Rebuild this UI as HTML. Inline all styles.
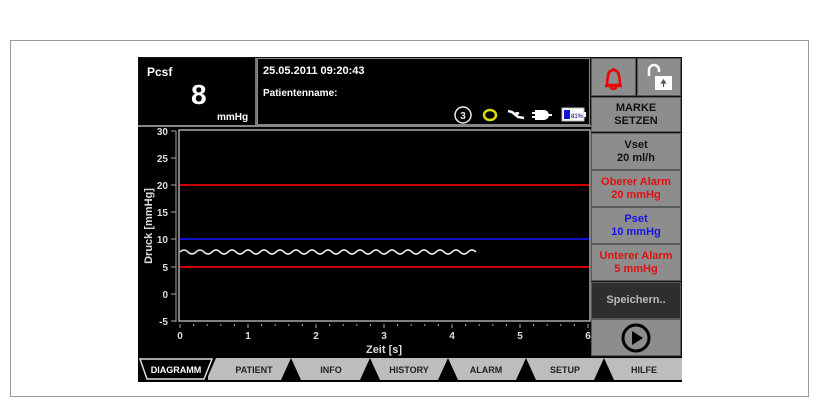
<!DOCTYPE html>
<html><head><meta charset="utf-8"><style>
body{margin:0;width:820px;height:410px;background:#fff;overflow:hidden;font-family:"Liberation Sans","DejaVu Sans",sans-serif;}
.outer{position:absolute;left:10px;top:40px;width:799px;height:357px;border:1px solid #9a9a9a;box-sizing:border-box;}
.scr{position:absolute;left:138px;top:57px;width:544px;height:325px;background:#111;}
.b{position:absolute;box-sizing:border-box;font-weight:bold;text-align:center;font-size:11px;line-height:13px;}
.btn{background:#8d8d8d;border:1px solid #5a5a5a;color:#111;left:591px;width:90px;display:flex;flex-direction:column;justify-content:center;align-items:center;}
</style></head><body>
<div class="outer"></div>
<div class="scr"></div>
<div class="b" style="left:139px;top:58px;width:116px;height:67px;background:#000;color:#fff;text-align:left;">
 <div style="position:absolute;left:8px;top:8px;font-size:12px;">Pcsf</div>
 <div style="position:absolute;left:52px;top:22px;font-size:28px;line-height:30px;">8</div>
 <div style="position:absolute;left:78px;top:53px;font-size:10px;">mmHg</div>
</div>
<div style="position:absolute;left:255px;top:58px;width:2px;height:68px;background:#777"></div>
<div class="b" style="left:257px;top:58px;width:333px;height:67px;background:#000;color:#fff;text-align:left;border:1px solid #888;">
 <div style="position:absolute;left:5px;top:6px;font-size:11px;">25.05.2011 09:20:43</div>
 <div style="position:absolute;left:5px;top:28px;font-size:10px;">Patientenname:</div>
 <svg style="position:absolute;left:190px;top:46px" width="140" height="20">
  <circle cx="15" cy="10" r="8" fill="none" stroke="#eee" stroke-width="1.5"/>
  <text x="15" y="14" font-size="10" fill="#eee" text-anchor="middle" font-family="Liberation Sans">3</text>
  <ellipse cx="42" cy="10" rx="6" ry="5" fill="none" stroke="#dd0" stroke-width="2.5"/>
  <path d="M60 6 l4 1 l6 5 l6 1 M66 9 l5 -1" stroke="#fff" stroke-width="2.5" fill="none"/>
  <path d="M88 6 h8 a4 4 0 0 1 0 8 h-8z M98 10h6 M84 8h4 M84 12h4" stroke="#fff" stroke-width="2" fill="#fff"/>
  <rect x="114" y="3" width="22" height="13" fill="#fff" stroke="#bbb"/>
  <rect x="136" y="7" width="2" height="5" fill="#fff"/>
  <rect x="116" y="5" width="6" height="9" fill="#1515d0"/>
  <text x="123" y="13" font-size="6" fill="#449" font-family="Liberation Sans">81%</text>
 </svg>
</div>
<div class="b" style="left:591px;top:58px;width:45px;height:38px;background:#8d8d8d;border:1px solid #555;">
 <svg width="43" height="36"><path d="M13 27 h17 M15 26 q0-4 1-9 a5.5 6 0 0 1 11 0 q1 5 1 9z M21.5 9 v2 M19 28 a2.5 2 0 0 0 5 0" stroke="#e00" stroke-width="2.5" fill="none"/></svg>
</div>
<div class="b" style="left:637px;top:58px;width:44px;height:38px;background:#8d8d8d;border:1px solid #555;">
 <svg width="42" height="36"><path d="M11 17 v-6 a5 5 0 0 1 10 0 v2" stroke="#fff" stroke-width="2.5" fill="none"/><rect x="17" y="17" width="17" height="14" fill="#fff"/><path d="M25.5 21 l-2 3 h4z M25.5 24v4" stroke="#555" stroke-width="1.2" fill="#555"/></svg>
</div>
<div class="b btn" style="top:97px;height:35px;">MARKE<br>SETZEN</div>
<div class="b btn" style="top:133px;height:37px;">Vset<br>20 ml/h</div>
<div class="b btn" style="top:170px;height:37px;color:#e01010;">Oberer Alarm<br>20 mmHg</div>
<div class="b btn" style="top:207px;height:37px;color:#1515e0;">Pset<br>10 mmHg</div>
<div class="b btn" style="top:244px;height:37px;color:#e01010;">Unterer Alarm<br>5 mmHg</div>
<div class="b btn" style="top:282px;height:37px;background:#2e2e2e;color:#bbb;">Speichern..</div>
<div class="b btn" style="top:319px;height:37px;"><svg width="32" height="32"><circle cx="16" cy="16" r="13" fill="none" stroke="#000" stroke-width="3"/><path d="M12 9 L23 16 L12 23z" fill="#000"/></svg></div>
<svg style="position:absolute;left:138px;top:125px" width="453" height="232" font-family="Liberation Sans" font-weight="bold">
 <rect x="0" y="0" width="453" height="232" fill="#000"/>
 <line x1="0" y1="1" x2="453" y2="1" stroke="#888" stroke-width="2"/>
 <rect x="41" y="5" width="411" height="191" fill="#000" stroke="#aaa" stroke-width="1.5"/>
 <g stroke="#aaa" stroke-width="1">
  <line x1="38" y1="6" x2="38" y2="197"/>
  <line x1="33" y1="6" x2="38" y2="6"/><line x1="33" y1="33" x2="38" y2="33"/><line x1="33" y1="60" x2="38" y2="60"/><line x1="33" y1="87" x2="38" y2="87"/><line x1="33" y1="114" x2="38" y2="114"/><line x1="33" y1="142" x2="38" y2="142"/><line x1="33" y1="169" x2="38" y2="169"/><line x1="33" y1="196" x2="38" y2="196"/>
  <path d="M42 199v4M55.6 199v2M69.2 199v2M82.8 199v2M96.4 199v2M110 199v4M123.6 199v2M137.2 199v2M150.8 199v2M164.4 199v2M178 199v4M191.6 199v2M205.2 199v2M218.8 199v2M232.4 199v2M246 199v4M259.6 199v2M273.2 199v2M286.8 199v2M300.4 199v2M314 199v4M327.6 199v2M341.2 199v2M354.8 199v2M368.4 199v2M382 199v4M395.6 199v2M409.2 199v2M422.8 199v2M436.4 199v2M450 199v4"/>
 </g>
 <g fill="#ddd" font-size="10" text-anchor="end">
  <text x="30" y="10">30</text><text x="30" y="37">25</text><text x="30" y="64">20</text><text x="30" y="91">15</text><text x="30" y="118">10</text><text x="30" y="146">5</text><text x="30" y="173">0</text><text x="30" y="200">-5</text>
 </g>
 <g fill="#ddd" font-size="10" text-anchor="middle">
  <text x="42" y="214">0</text><text x="110" y="214">1</text><text x="178" y="214">2</text><text x="246" y="214">3</text><text x="314" y="214">4</text><text x="382" y="214">5</text><text x="450" y="214">6</text>
  <text x="246" y="228" font-size="11">Zeit [s]</text>
 </g>
 <text transform="translate(14,101) rotate(-90)" fill="#ddd" font-size="11" text-anchor="middle">Druck [mmHg]</text>
 <line x1="42" y1="60" x2="451" y2="60" stroke="#c00" stroke-width="2"/>
 <line x1="42" y1="114" x2="451" y2="114" stroke="#1010c8" stroke-width="2"/>
 <line x1="42" y1="142" x2="451" y2="142" stroke="#c00" stroke-width="2"/>
 <path d="M42 127 q4 -4 8 0 t8 0 t8 0 t8 0 t8 0 t8 0 t8 0 t8 0 t8 0 t8 0 t8 0 t8 0 t8 0 t8 0 t8 0 t8 0 t8 0 t8 0 t8 0 t8 0 t8 0 t8 0 t8 0 t8 0 t8 0 t8 0 t8 0 t8 0 t8 0 t8 0 t8 0 t8 0 t8 0 t8 0 t8 0 t8 0 t8 0" stroke="#ddd" stroke-width="1.6" fill="none"/>
</svg>
<svg style="position:absolute;left:138px;top:357px" width="544" height="25" font-family="Liberation Sans" font-weight="bold" font-size="9">
 <rect width="544" height="25" fill="#000"/>
 <rect x="70" y="1" width="474" height="22" fill="#bdbdbd"/>
 <g fill="#000">
  <polygon points="143,23 153,1 163,23"/><polygon points="222,23 232,1 242,23"/><polygon points="300,23 310,1 320,23"/><polygon points="378,23 388,1 398,23"/><polygon points="456,23 466,1 476,23"/>
 </g>
 <polygon points="0,1 78,1 68,24 10,24" fill="#000"/>
 <polygon points="2,2 74,2 66,22 9,22" fill="#000" stroke="#ddd" stroke-width="1.5"/>
 <g text-anchor="middle" fill="#222">
  <text x="38" y="16" fill="#fff">DIAGRAMM</text>
  <text x="116" y="16">PATIENT</text>
  <text x="193" y="16">INFO</text>
  <text x="271" y="16">HISTORY</text>
  <text x="348" y="16">ALARM</text>
  <text x="427" y="16">SETUP</text>
  <text x="506" y="16">HILFE</text>
 </g>
</svg>
</body></html>
